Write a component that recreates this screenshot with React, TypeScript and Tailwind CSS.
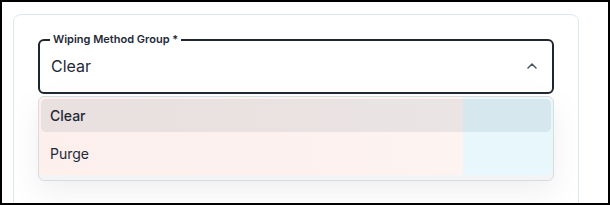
import React from "react";

export default function App() {
  return (
    <div className="w-[610px] h-[205px] border-2 border-black bg-white overflow-hidden font-['Inter','Liberation_Sans',sans-serif]">
      <div className="ml-[11px] mt-[12px] w-[566px] h-[220px] rounded-lg border border-[#dde8ee] bg-white px-[24px] pt-[18px]">
        <fieldset className="h-[61px] rounded-md border-2 border-[#1f2630] pl-[10px] pr-[14px]">
          <legend className="px-[3px] text-[11px] font-semibold leading-[13px] text-[#1f2937]">
            Wiping Method Group *
          </legend>
          <div className="flex h-[40px] items-center justify-between">
            <span className="pl-[1px] text-[16px] text-[#1f2937]">Clear</span>
            <svg width="12" height="8" viewBox="0 0 12 8">
              <path d="M2 6 L6 2 L10 6" fill="none" stroke="#4b5563" strokeWidth="1.5" strokeLinecap="round" strokeLinejoin="round" />
            </svg>
          </div>
        </fieldset>
        <div className="mt-[2px] rounded-md border border-[#d8dcdf] bg-[#f3f4f5] pb-[5px] shadow-[0_10px_28px_rgba(120,120,130,0.12)]">
          <div className="rounded-md bg-[linear-gradient(to_right,#fcefec_0px,#fdf3f1_424px,#e7f7fb_424px)] p-[2px] pb-[4px]">
            <div className="flex h-[33px] items-center rounded-[5px] bg-[rgba(40,80,100,0.09)] px-[9px] text-[14px] font-medium text-[#1f2937]">
              Clear
            </div>
            <div className="mt-[4px] flex h-[35px] items-center px-[9px] text-[14px] text-[#1f2937]">
              Purge
            </div>
          </div>
        </div>
      </div>
    </div>
  );
}
